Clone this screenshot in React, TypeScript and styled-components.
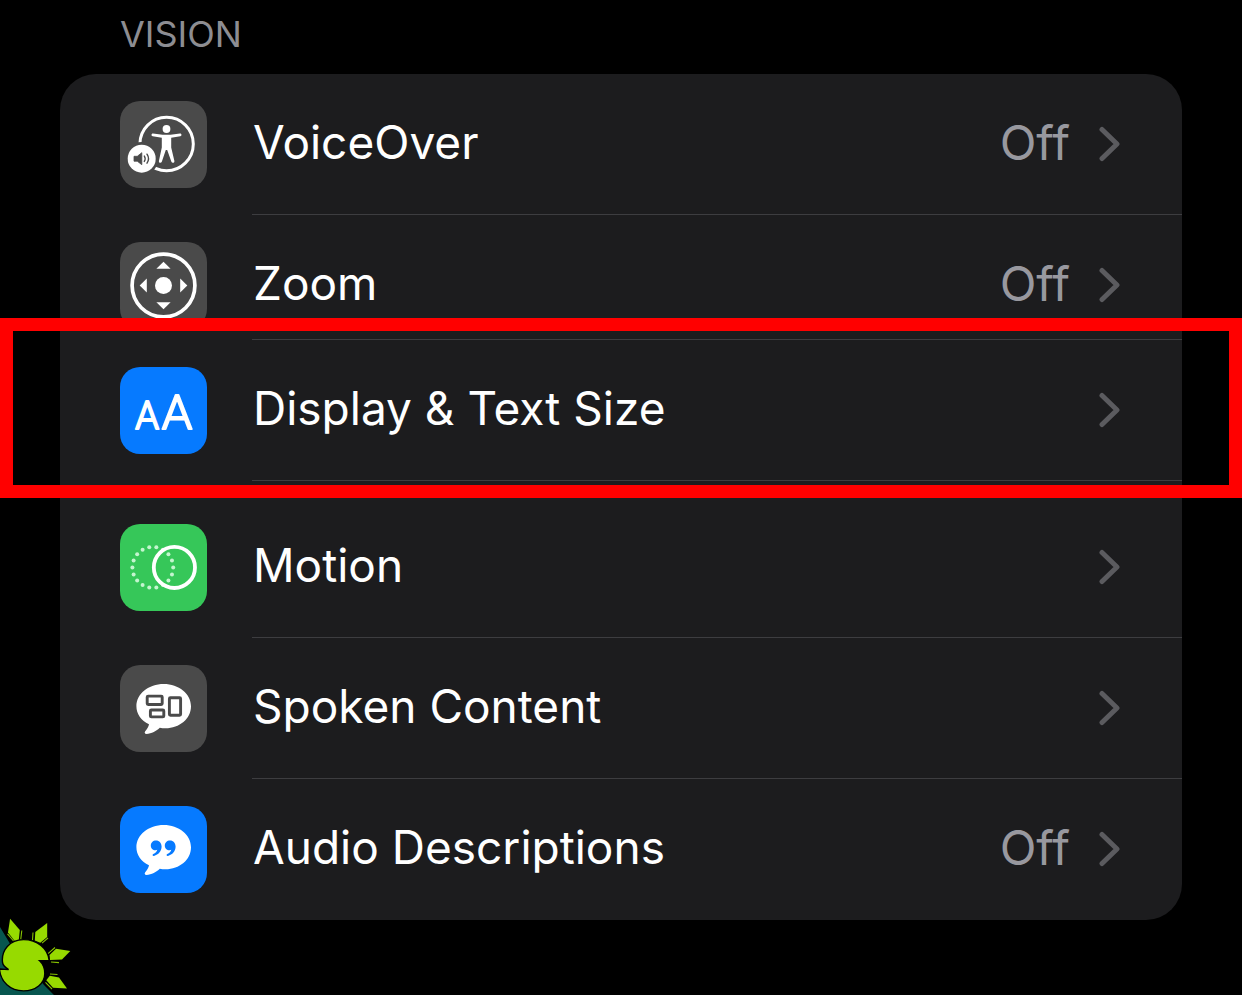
import React from "react";
import styled, { createGlobalStyle } from "styled-components";

const GlobalStyle = createGlobalStyle`
  *, *::before, *::after { box-sizing: border-box; }
  html { height: 100%; }
  body {
    margin: 0;
    min-height: 100%;
    position: relative;
    overflow-x: hidden;
    background: #000;
    color: #fff;
    font-family: Inter, "Liberation Sans", sans-serif;
  }
`;

const Page = styled.main`
  padding: 12px 60px 75px;
`;

const SectionTitle = styled.h2`
  margin: 0;
  padding: 0 60px 18px;
  font-size: 36px;
  line-height: 44px;
  font-weight: 400;
  color: #8d8d92;
`;

const Group = styled.ul`
  list-style: none;
  margin: 0;
  padding: 0;
  border-radius: 36px;
  background: #1c1c1e;
`;

const Item = styled.li<{ $cropped?: boolean; $spaced?: boolean }>`
  position: relative;
  height: ${(p) => (p.$cropped ? 125 : 141)}px;
  margin-top: ${(p) => (p.$spaced ? 16 : 0)}px;
`;

const RowLink = styled.a`
  display: flex;
  height: 100%;
  padding-left: 60px;
  gap: 45px;
  color: inherit;
  text-decoration: none;
`;

const Tile = styled.span<{ $color: string }>`
  flex: none;
  width: 87px;
  height: 87px;
  margin-top: 27px;
  border-radius: 20px;
  background: ${(p) => p.$color};

  svg { display: block; width: 100%; height: 100%; }
`;

const RowBody = styled.span<{ $last?: boolean }>`
  flex: 1;
  display: flex;
  align-items: flex-start;
  padding: 39px 60px 0 1px;
  border-bottom: ${(p) => (p.$last ? "none" : "1px solid #3d3d40")};
  line-height: 60px;
`;

const Label = styled.span`
  flex: 1;
  font-size: 46px;
  line-height: 58px;
`;

const Value = styled.span`
  margin-right: 28px;
  font-size: 48px;
  color: #98989f;
`;

const Chevron = styled.svg`
  flex: none;
  width: 24px;
  height: 36px;
  margin-top: 13px;
`;

const Highlight = styled.span`
  position: absolute;
  inset: -22px -60px -17px;
  border: 13px solid #f00;
  pointer-events: none;
  z-index: 1;
`;

const Logo = styled.svg`
  position: absolute;
  left: 0;
  bottom: 0;
  width: 90px;
  height: 90px;
`;

const GRAY = "#4a4a4a";
const BLUE = "#067aff";
const GREEN = "#36c759";

const VoiceOverIcon = () => (
  <svg viewBox="0 0 87 87" aria-hidden="true">
    <mask id="badge-gap">
      <rect width="87" height="87" fill="#fff" />
      <circle cx="21.7" cy="57.7" r="16.6" fill="#000" />
    </mask>
    <g mask="url(#badge-gap)">
      <circle cx="46.6" cy="43" r="26.7" fill="none" stroke="#fff" strokeWidth="3" />
    </g>
    <circle cx="46.5" cy="28" r="3.9" fill="#fff" />
    <path
      d="M33 32.5 L42.5 33.8 H50.5 L60 32.5 C61.8 32.4 62 35 60.3 35.3 L51.2 36.8 V46.5 L54.4 60 C54.7 62 52 62.6 51.4 60.8 L47.2 49 H45.8 L41.8 60.8 C41.2 62.6 38.6 62 38.9 60 L41.8 46.5 V36.8 L32.7 35.3 C31 35 31.2 32.4 33 32.5 Z"
      fill="#fff"
    />
    <circle cx="21.7" cy="57.7" r="14" fill="#fff" />
    <path d="M14 55.3 H17.3 L21.8 51.7 V63.7 L17.3 60.2 H14 Z" fill={GRAY} stroke={GRAY} strokeWidth="0.8" strokeLinejoin="round" />
    <path d="M24.3 55 Q26 57.7 24.3 60.4 M27 53.2 Q30 57.7 27 62.2" fill="none" stroke={GRAY} strokeWidth="1.4" strokeLinecap="round" />
  </svg>
);

const ZoomIcon = () => (
  <svg viewBox="0 0 87 87" aria-hidden="true" fill="#fff">
    <circle cx="43.5" cy="43.5" r="31.4" fill="none" stroke="#fff" strokeWidth="3.7" />
    <circle cx="43.5" cy="43.5" r="8.5" />
    <path d="M43.5 19.7 L50.6 26.8 H36.4 Z" />
    <path d="M43.5 67.3 L50.6 60.2 H36.4 Z" />
    <path d="M19.7 43.5 L26.8 36.4 V50.6 Z" />
    <path d="M67.3 43.5 L60.2 36.4 V50.6 Z" />
  </svg>
);

const IconLetter = styled.text`
  font-family: Roboto, sans-serif;
  font-weight: 300;
  fill: #fff;
  stroke: #fff;
  stroke-width: 2;
  stroke-linejoin: round;
  text-anchor: middle;
`;

const TextSizeIcon = () => (
  <svg viewBox="0 0 87 87" aria-hidden="true">
    <IconLetter x="27" y="62" fontSize="38">A</IconLetter>
    <IconLetter x="57" y="62" fontSize="49">A</IconLetter>
  </svg>
);

const MotionIcon = () => (
  <svg viewBox="0 0 87 87" aria-hidden="true">
    {Array.from({ length: 18 }, (_, i) => {
      const a = (i * Math.PI) / 9;
      return (
        <circle key={i} cx={32.8 + 20.4 * Math.cos(a)} cy={43.4 + 20.4 * Math.sin(a)} r="2" fill="#c4f5cf" />
      );
    })}
    <circle cx="54.4" cy="43.4" r="20.6" fill="none" stroke="#fff" strokeWidth="3.8" />
  </svg>
);

const Bubble = () => (
  <path
    d="M43.7 19 C58.8 19 71 28.8 71 41.3 C71 53.8 59.5 63.3 45.5 63.3 C43.3 63.3 41.5 63.2 39.8 62.8 C36.5 66 31.5 68.8 26.5 69 C24.7 69 24.2 67.4 25.2 66.2 C27.2 64 28.6 61.6 29 59.2 C21 55.5 16.4 49 16.4 41.3 C16.4 28.8 28.6 19 43.7 19 Z"
    fill="#fff"
  />
);

const SpokenIcon = () => (
  <svg viewBox="0 0 87 87" aria-hidden="true">
    <Bubble />
    <g fill="none" stroke={GRAY} strokeWidth="2.9">
      <rect x="27.2" y="31.1" width="15" height="8.4" rx="1" />
      <rect x="30.4" y="45" width="13.4" height="6.9" rx="1" />
      <rect x="49.4" y="32.8" width="11.2" height="17.4" rx="1" />
    </g>
  </svg>
);

const quoteMark =
  "M36 34.4 C39.4 34.4 41.6 37 41.6 40.6 C41.6 45.2 38.4 49 34 49.9 C32.6 50.2 32 48.6 33.3 48 C35.4 47.1 36.9 45.7 37.3 43.8 C36.8 44.1 36.2 44.2 35.5 44.2 C32.8 44.2 30.8 42.1 30.8 39.4 C30.8 36.5 33 34.4 36 34.4 Z";

const AudioIcon = () => (
  <svg viewBox="0 0 87 87" aria-hidden="true">
    <Bubble />
    <path d={quoteMark} fill={BLUE} />
    <path d={quoteMark} fill={BLUE} transform="translate(14 0)" />
  </svg>
);

interface Setting {
  name: string;
  color: string;
  icon: React.ReactNode;
  value?: string;
  cropped?: boolean;
  spaced?: boolean;
  highlighted?: boolean;
}

const settings: Setting[] = [
  { name: "VoiceOver", color: GRAY, icon: <VoiceOverIcon />, value: "Off" },
  { name: "Zoom", color: GRAY, icon: <ZoomIcon />, value: "Off", cropped: true },
  { name: "Display & Text Size", color: BLUE, icon: <TextSizeIcon />, highlighted: true },
  { name: "Motion", color: GREEN, icon: <MotionIcon />, spaced: true },
  { name: "Spoken Content", color: GRAY, icon: <SpokenIcon /> },
  { name: "Audio Descriptions", color: BLUE, icon: <AudioIcon />, value: "Off" },
];

const SunLogo = () => (
  <Logo viewBox="0 0 90 90" aria-hidden="true">
    <path d="M0 22 L12 42 L44 80 L54 90 H0 Z" fill="#07564f" />
    <path
      d="M7.5 28 L14 36.5 M21.8 25.5 L20.8 34.5 M33 27.5 L32.5 35 M41.5 38.5 L48 33 M48 48.8 L55 42.5 M50.5 57 L59 57.6 M49.5 69 L57.5 69.5 M45 77 L52 84"
      fill="none"
      stroke="#000"
      strokeWidth="3"
    />
    <g fill="#97da00">
      <path d="M10.1 13.8 L19.8 25 L18.8 35 L15 36.5 L8 27.5 Z" />
      <path d="M47.2 18 L47.2 32 L40.3 37.8 L34.8 35.5 L35.3 27 Z" />
      <path d="M70.3 46 L62 54.6 L50 55 L49.5 50 L56 43.8 Z" />
      <path d="M67 83.6 L53 82.7 L46.3 75.2 L49.8 70.7 L59 72.5 Z" />
    </g>
    <path
      d="M7.5 28.8 L13.5 36 M21.8 25.5 L20.8 34 M33 27.5 L32.5 35 M42 38.2 L48 33 M48 48.6 L55 42.5 M51 57 L59 57.6 M50 69 L57.5 69.5 M45.5 77.4 L52 84"
      fill="none"
      stroke="#86c200"
      strokeWidth="1.1"
    />
    <path
      d="M2.6 58 C0.8 45 10 34.6 23.5 34.6 C37 34.6 48 43 49.2 55.4 L39.4 55.6 C42.6 58.6 44.8 63.6 44.8 68.5 C44.8 78.5 35.5 85.9 23.5 85.9 C10 85.9 0.8 77 -0.6 64 L8.6 64.6 C5.6 62.8 3.2 61 2.6 58 Z"
      fill="#97da00"
      stroke="#000"
      strokeWidth="1.4"
    />
  </Logo>
);

export default function App() {
  return (
    <>
      <GlobalStyle />
      <Page>
        <SectionTitle>VISION</SectionTitle>
        <Group>
          {settings.map((s, i) => (
            <Item key={s.name} $cropped={s.cropped} $spaced={s.spaced}>
              <RowLink href="#">
                <Tile $color={s.color}>{s.icon}</Tile>
                <RowBody $last={i === settings.length - 1}>
                  <Label>{s.name}</Label>
                  {s.value && <Value>{s.value}</Value>}
                  <Chevron viewBox="0 0 24 36" aria-hidden="true">
                    <path
                      d="M4 3.5 L19 18 L4 32.5"
                      fill="none"
                      stroke="#5b5b5f"
                      strokeWidth="5"
                      strokeLinecap="round"
                      strokeLinejoin="round"
                    />
                  </Chevron>
                </RowBody>
              </RowLink>
              {s.highlighted && <Highlight aria-hidden="true" />}
            </Item>
          ))}
        </Group>
      </Page>
      <SunLogo />
    </>
  );
}
